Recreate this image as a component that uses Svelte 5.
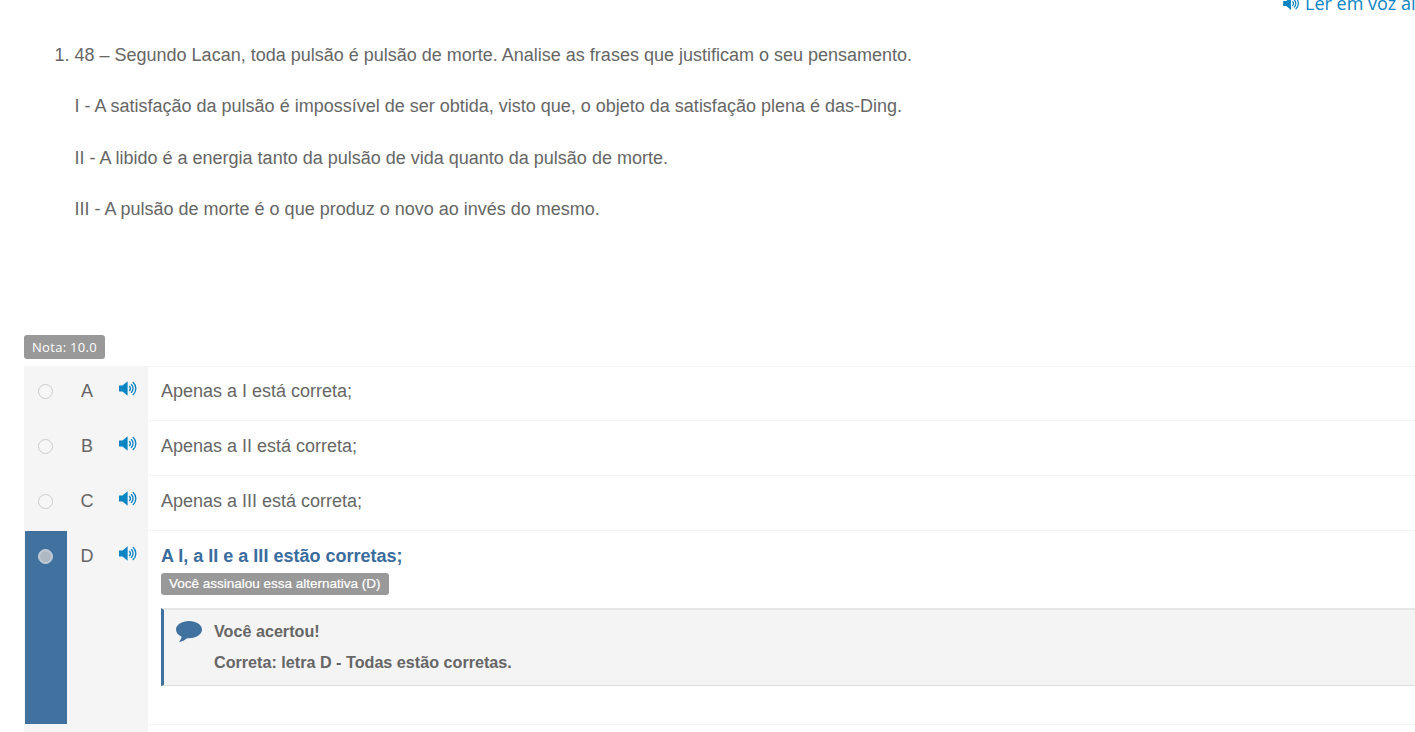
<script lang="ts">
  const statements = [
    'I - A satisfação da pulsão é impossível de ser obtida, visto que, o objeto da satisfação plena é das-Ding.',
    'II - A libido é a energia tanto da pulsão de vida quanto da pulsão de morte.',
    'III - A pulsão de morte é o que produz o novo ao invés do mesmo.',
  ];

  const options = [
    { letter: 'A', text: 'Apenas a I está correta;' },
    { letter: 'B', text: 'Apenas a II está correta;' },
    { letter: 'C', text: 'Apenas a III está correta;' },
  ];
</script>

{#snippet speaker()}
  <svg class="speaker" viewBox="0 0 18 14" aria-hidden="true">
    <path d="M0 4.200h3.400L8.400 0v14L3.400 9.800H0z" fill="currentColor" />
    <path d="M10.300 5a2.800 2.800 0 0 1 0 4" fill="none" stroke="currentColor" stroke-width="1.400" stroke-linecap="round" />
    <path d="M12 3.200a5.200 5.200 0 0 1 0 7.600" fill="none" stroke="currentColor" stroke-width="1.300" stroke-linecap="round" />
    <path d="M13.800 1.200a7.800 7.800 0 0 1 0 11.600" fill="none" stroke="currentColor" stroke-width="1.300" stroke-linecap="round" />
  </svg>
{/snippet}

<div class="page">
  <div class="read-aloud">
    {@render speaker()}
    <span>Ler em voz alta</span>
  </div>

  <ol class="question">
    <li>
      <p>48 – Segundo Lacan, toda pulsão é pulsão de morte. Analise as frases que justificam o seu pensamento.</p>
      {#each statements as line}
        <p>{line}</p>
      {/each}
    </li>
  </ol>

  <span class="grade">Nota: 10.0</span>

  <div class="options">
    {#each options as option}
      <div class="option">
        <div class="side">
          <div class="mark"><span class="radio"></span></div>
          <div class="letter">{option.letter}</div>
          <div class="sound">{@render speaker()}</div>
        </div>
        <div class="answer">{option.text}</div>
      </div>
    {/each}

    <div class="option chosen">
      <div class="side">
        <div class="mark"><span class="radio"></span></div>
        <div class="letter">D</div>
        <div class="sound">{@render speaker()}</div>
      </div>
      <div class="answer">
        <strong class="title">A I, a II e a III estão corretas;</strong>
        <span class="picked">Você assinalou essa alternativa (D)</span>
        <div class="feedback">
          <svg class="bubble" viewBox="0 0 26 22" aria-hidden="true">
            <path d="M13 0C5.800 0 0 3.800 0 8.600c0 3 2.200 5.600 5.600 7.200-.3 2-1.400 3.800-2.600 5.200 3-.4 6-2 8-3.800.7.100 1.300.100 2 .100 7.200 0 13-3.900 13-8.700S20.200 0 13 0z" fill="#41719f" />
          </svg>
          <div class="feedback-text">
            <div>Você acertou!</div>
            <div>Correta: letra D - Todas estão corretas.</div>
          </div>
        </div>
      </div>
    </div>

    <div class="option">
      <div class="side"></div>
      <div class="answer"></div>
    </div>
  </div>
</div>

<style>
  :global(body) {
    margin: 0;
    background: #fff;
    overflow: hidden;
  }
  .page {
    width: 1415px;
    height: 732px;
    overflow: hidden;
    font-family: 'Liberation Sans', Arial, sans-serif;
    color: #666;
  }
  .read-aloud {
    display: flex;
    align-items: center;
    gap: 5px;
    height: 22px;
    margin-top: -8px;
    padding-left: 1283px;
    white-space: nowrap;
    font-family: 'Open Sans', sans-serif;
    font-size: 18px;
    color: #0b84c4;
  }
  .read-aloud .speaker {
    flex: none;
    width: 17px;
    height: 13px;
  }
  .question {
    margin: 28.500px 0 0;
    padding: 0 0 0 74.500px;
    font-size: 18px;
    line-height: 25.700px;
  }
  .question p {
    margin: 0 0 25.800px;
  }
  .grade {
    display: block;
    width: fit-content;
    margin: 112px 0 0 24px;
    padding: 0 8px;
    height: 24px;
    line-height: 25px;
    border-radius: 3px;
    background: #999;
    color: #fff;
    font-family: 'Open Sans', sans-serif;
    font-size: 13px;
    font-weight: 500;
    letter-spacing: 0.3px;
  }
  .options {
    margin: 7px 0 0 24px;
  }
  .option {
    display: flex;
    height: 55px;
  }
  .option.chosen {
    height: 194px;
  }
  .side {
    display: flex;
    flex: none;
    width: 124px;
    background: #f5f5f5;
  }
  .mark {
    display: flex;
    justify-content: center;
    flex: none;
    width: 42px;
    margin-left: 1px;
    padding-top: 18px;
    box-sizing: border-box;
  }
  .chosen .mark {
    height: 193px;
    background: #41719f;
  }
  .radio {
    width: 13px;
    height: 13px;
    margin-left: -2px;
    border: 1px solid #ccc;
    border-radius: 50%;
    background: #f6f6f6;
  }
  .chosen .radio {
    border-color: #c4cfda;
    background: #aeb8c3;
    box-shadow: inset 0 0 0 1px #c4cfda;
  }
  .letter {
    width: 40px;
    padding-top: 15px;
    text-align: center;
    font-size: 18px;
    line-height: 20px;
  }
  .sound {
    padding: 15.500px 0 0 12px;
    color: #0b84c4;
  }
  .sound .speaker {
    display: block;
    width: 18.500px;
    height: 15px;
  }
  .answer {
    flex: 1;
    box-sizing: border-box;
    padding: 13px 0 0 13px;
    border-bottom: 1px solid #f3f3f3;
    font-size: 18px;
    line-height: 25.700px;
  }
  .option:first-child .answer {
    padding-top: 12px;
    border-top: 1px solid #f3f3f3;
  }
  .title {
    display: block;
    color: #3a6c9e;
  }
  .picked {
    display: block;
    width: fit-content;
    height: 22px;
    margin-top: 4px;
    padding: 0 8px;
    border-radius: 3px;
    background: #999;
    color: #fff;
    font-size: 13.500px;
    font-weight: 400;
    line-height: 22px;
    -webkit-text-stroke: 0.2px #fff;
  }
  .feedback {
    display: flex;
    height: 78px;
    margin-top: 13px;
    box-sizing: border-box;
    padding: 11px 0 0 12px;
    border-left: 3px solid #41719f;
    border-top: 2px solid #e6e6e6;
    border-bottom: 1px solid #ddd;
    background: #f4f4f4;
  }
  .bubble {
    flex: none;
    width: 26px;
    height: 22px;
  }
  .feedback-text {
    margin-left: 12px;
    margin-top: -5px;
    font-size: 16.160px;
    font-weight: 700;
    line-height: 31px;
  }
</style>
